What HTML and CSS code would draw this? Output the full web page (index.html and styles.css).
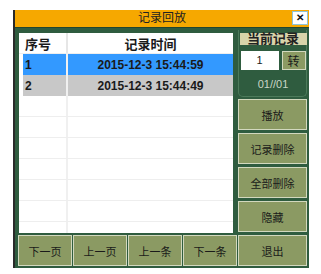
FILE: index.html
```html
<!DOCTYPE html>
<html lang="zh-CN">
  <head>
    <meta charset="UTF-8" />
    <title>记录回放</title>
    <link rel="stylesheet" href="styles.css">
  </head>
  <body>
    <div class="window">
      <div class="titlebar">
        <span class="title">记录回放</span>
        <span class="close">✕</span>
      </div>

      <div class="main">
        <div class="left">
          <div class="table">
            <div class="row head">
              <div class="cell num">序号</div>
              <div class="cell time">记录时间</div>
            </div>
            <div class="row data selected">
              <div class="cell num">1</div>
              <div class="cell time">2015-12-3 15:44:59</div>
            </div>
            <div class="row data odd">
              <div class="cell num">2</div>
              <div class="cell time">2015-12-3 15:44:49</div>
            </div>
            <div class="row empty"><div class="cell num"></div><div class="cell time"></div></div>
            <div class="row empty"><div class="cell num"></div><div class="cell time"></div></div>
            <div class="row empty"><div class="cell num"></div><div class="cell time"></div></div>
            <div class="row empty"><div class="cell num"></div><div class="cell time"></div></div>
            <div class="row empty"><div class="cell num"></div><div class="cell time"></div></div>
            <div class="row empty"><div class="cell num"></div><div class="cell time"></div></div>
            <div class="row empty last"><div class="cell num"></div><div class="cell time"></div></div>
          </div>

          <div class="pager">
            <button class="btn">下一页</button>
            <button class="btn">上一页</button>
            <button class="btn">上一条</button>
            <button class="btn">下一条</button>
          </div>
        </div>

        <div class="right">
          <div class="current">
            <div class="current-label">当前记录</div>
            <div class="goto">
              <div class="goto-input">1</div>
              <button class="btn goto-btn">转</button>
            </div>
            <div class="counter">01//01</div>
          </div>
          <button class="btn">播放</button>
          <button class="btn">记录删除</button>
          <button class="btn">全部删除</button>
          <button class="btn">隐藏</button>
          <button class="btn">退出</button>
        </div>
      </div>
    </div>
  </body>
</html>
```

FILE: styles.css
```css
* {
  margin: 0;
  padding: 0;
  box-sizing: border-box;
}

body {
  font-family: "Liberation Sans", "Noto Sans CJK SC", sans-serif;
  background-color: #ffffff;
  color: #1a1a1a;
}

.window {
  margin: 10px 0 0 13px;
  width: 296px;
  height: 258px;
  background-color: #2f5c3f;
  border-left: 2px solid #2a2a2a;
  display: flex;
  flex-direction: column;
}

.titlebar {
  height: 17px;
  background-color: #f6a800;
  display: flex;
  align-items: center;
  justify-content: center;
  position: relative;
}

.title {
  font-size: 12px;
  line-height: 17px;
  color: #222;
}

.close {
  position: absolute;
  right: 1px;
  top: 1px;
  width: 16px;
  height: 14px;
  background-color: #ffffff;
  border: 1px solid #8fc3d6;
  font-size: 10px;
  font-weight: bold;
  line-height: 12px;
  text-align: center;
  color: #111;
}

.main {
  flex: 1;
  display: grid;
  grid-template-columns: 219px 69px;
  column-gap: 1px;
  padding: 2px 2px 3px 3px;
  border-top: 1px solid #23452f;
}

.left {
  display: flex;
  flex-direction: column;
}

.table {
  margin: 3px 4px 0 1px;
  height: 200px;
  background-color: #ffffff;
  overflow: hidden;
}

.row {
  display: flex;
  height: 21px;
  border-bottom: 1px solid #eeeeee;
}

.row.last {
  border-bottom: none;
}

.cell {
  display: flex;
  align-items: center;
  font-size: 12px;
  font-weight: bold;
}

.cell.num {
  width: 49px;
  border-right: 2px solid #f0f0f0;
  padding-left: 6px;
}

.cell.time {
  flex: 1;
  justify-content: center;
}

.head .cell {
  font-size: 13px;
  border-right-color: #e6e6e6;
}

.row.data {
  margin-left: 4px;
  border-bottom: none;
}

.row.data .cell.num {
  width: 45px;
  padding-left: 2px;
}

.selected {
  background-color: #3399ff;
}

.odd {
  background-color: #c8c8c8;
}

.pager {
  margin-top: 2px;
  display: grid;
  grid-template-columns: repeat(4, 1fr);
  column-gap: 1px;
}

.btn {
  height: 31px;
  background-color: #8b9a63;
  border: 1px solid #d2d8be;
  font-family: "Liberation Sans", "Noto Sans CJK SC", sans-serif;
  font-size: 11px;
  color: #1a1a1a;
}

.right {
  display: flex;
  flex-direction: column;
  gap: 3px;
}

.current {
  height: 67px;
  margin-bottom: -1px;
  border: 1px solid #4c7a5a;
  border-top: none;
  border-radius: 0 0 5px 5px;
  display: flex;
  flex-direction: column;
  align-items: center;
  padding: 3px 0 0 1px;
}

.current-label {
  width: 67px;
  height: 12px;
  background-color: #d8d4aa;
  font-size: 13px;
  font-weight: bold;
  line-height: 12px;
  text-align: center;
  color: #222;
}

.goto {
  margin-top: 6px;
  display: flex;
  gap: 3px;
}

.goto-input {
  width: 38px;
  height: 19px;
  background-color: #ffffff;
  font-size: 11px;
  line-height: 19px;
  text-align: center;
}

.goto-btn {
  width: 24px;
  height: 19px;
  font-size: 12px;
}

.counter {
  margin-top: 8px;
  font-size: 11px;
  color: #c9d6c6;
}
```
